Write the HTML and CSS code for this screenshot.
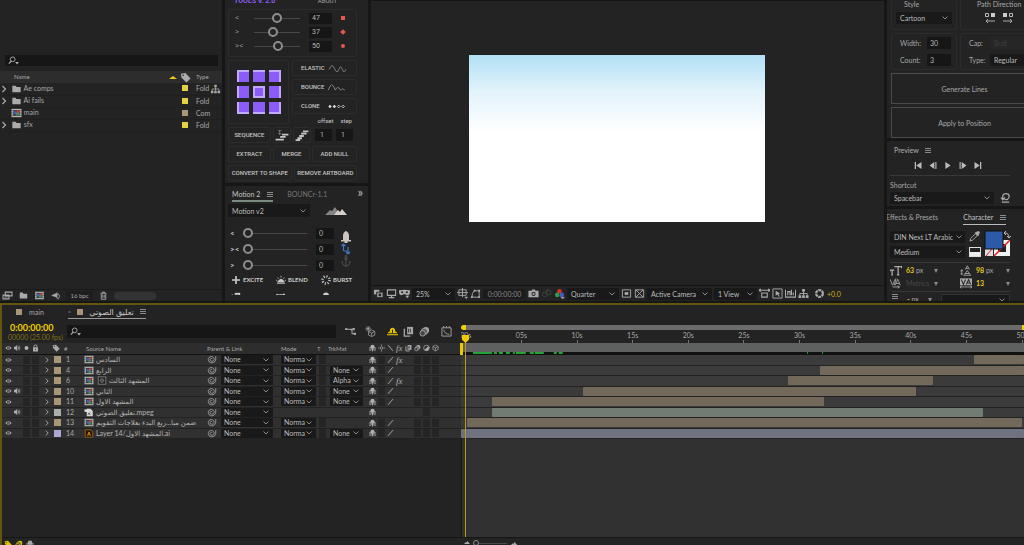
FILE: index.html
```
<!DOCTYPE html>
<html lang="en">
<head>
<meta charset="UTF-8">
<title>Motion Editor</title>
<link rel="stylesheet" href="styles.css">
</head>
<body>
<svg class="sprite" aria-hidden="true">
    <symbol id="search" viewBox="0 0 14 12"><circle cx="6" cy="4.5" r="3" fill="none" stroke="currentColor" stroke-width="1.2"/><path d="M4 7L1 10" stroke="currentColor" stroke-width="1.5"/><path d="M9 8h5l-2.500 3z" fill="currentColor"/></symbol>
    <symbol id="folder" viewBox="0 0 12 12"><path d="M1 2h4l1 1.500h5V10H1z" fill="currentColor"/></symbol>
    <symbol id="comp" viewBox="0 0 12 12"><path d="M0 1h12v10H0z" fill="#b4b4b4"/><path d="M2 2.500h8v7H2z" fill="#3b3b3b"/><path d="M0 3h1.500M0 6h1.500M0 9h1.500M10.500 3H12M10.500 6H12M10.500 9H12" stroke="#444"/><path d="M6 3h3.500v3H6z" fill="#d23a30"/><path d="M5 5.500h4V9H5z" fill="#4c8a52"/><circle cx="4.500" cy="5.500" r="2" fill="#3d66b8"/></symbol>
    <symbol id="arrow" viewBox="0 0 6 10"><path d="M1.500 2l3 3-3 3" fill="none" stroke="currentColor" stroke-width="1.200"/></symbol>
    <symbol id="tag" viewBox="0 0 12 12"><path d="M1 2l5-1 5.500 6L7 11.500 1.500 6z" fill="currentColor"/><circle cx="3.500" cy="3.500" r=".9" fill="#2d2d2d"/></symbol>
    <symbol id="tree" viewBox="0 0 12 12"><path d="M4.500 1h3v3h-3zM.5 8h3v3h-3zM8.500 8h3v3h-3zM4.500 8h3v3h-3z" fill="currentColor"/><path d="M6 4v4M2 8V6h8v2" fill="none" stroke="currentColor"/></symbol>
    <symbol id="footage" viewBox="0 0 14 12"><path d="M4 1.500h9v5H4zM1 5.500h8v5H1z" fill="#222" stroke="currentColor" stroke-width="1.400"/><path d="M3 8h4" stroke="currentColor"/></symbol>
    <symbol id="rocket" viewBox="0 0 12 12"><path d="M1 6l7-3v5zM8 2l1.500 1.500M8 9.500L10.500 11" fill="currentColor" stroke="currentColor"/><circle cx="9" cy="7" r="2.500" fill="none" stroke="currentColor"/></symbol>
    <symbol id="trash" viewBox="0 0 12 12"><path d="M2 3h8M4.500 3V1.500h3V3M3 4v7h6V4M5 5v4M7 5v4" fill="none" stroke="currentColor" stroke-width="1.200"/></symbol>
    <symbol id="eye" viewBox="0 0 12 10"><path d="M.5 5Q6-1 11.500 5 6 11 .5 5z" fill="currentColor"/><circle cx="6" cy="5" r="2.300" fill="#2b2b2b"/><circle cx="6" cy="5" r="1" fill="currentColor"/></symbol>
    <symbol id="sound" viewBox="0 0 12 10"><path d="M0 3h2l3.500-3v10L2 7H0z" fill="currentColor"/><path d="M7 2.500q2 2.500 0 5M8.500 1q3.500 4 0 8" fill="none" stroke="currentColor" stroke-width="1.200"/></symbol>
    <symbol id="dot" viewBox="0 0 10 10"><circle cx="5" cy="5" r="2.800" fill="currentColor"/></symbol>
    <symbol id="lock" viewBox="0 0 10 10"><path d="M1.500 4h7v6h-7z" fill="currentColor"/><path d="M3 4V2.500a2 2 0 0 1 4 0V4" fill="none" stroke="currentColor" stroke-width="1.300"/><path d="M5 6v2" stroke="#2d2d2d"/></symbol>
    <symbol id="whip" viewBox="0 0 12 10"><path d="M10.500 1v3.500c0 3-2.500 4.500-5 4.500s-4-2-4-4 1.500-3.500 3.700-3.500S8.500 3 8.500 5 7 7 5.500 7 3.500 6 3.700 5 5 3.300 6.200 4" fill="none" stroke="currentColor"/></symbol>
    <symbol id="shy" viewBox="0 0 10 10"><path d="M2 5V3.500a3 3 0 0 1 6 0V5z" fill="currentColor"/><path d="M0 5h10M0 8h3.500M6.500 8H10M5 4v6M2.500 6.500h5" stroke="currentColor" stroke-width="1.300"/></symbol>
    <symbol id="arch" viewBox="0 0 12 10"><path d="M1 7q0-2 2-2 0-4 3-4t3 4q2 0 2 2z" fill="currentColor"/><path d="M0 8.500h12" stroke="currentColor" stroke-width="1.200"/><path d="M6 3v4" stroke="#232323"/></symbol>
    <symbol id="sun" viewBox="0 0 10 10"><circle cx="5" cy="5" r="1.800" fill="none" stroke="currentColor"/><path d="M5 0v2M5 8v2M0 5h2M8 5h2" stroke="currentColor"/></symbol>
    <symbol id="slash" viewBox="0 0 10 10"><path d="M1.500 9L8.500 1" stroke="currentColor" stroke-width="1.300"/></symbol>
    <symbol id="backslash" viewBox="0 0 10 10"><path d="M1.500 1l7 8" stroke="currentColor" stroke-width="1.300"/></symbol>
    <symbol id="blend" viewBox="0 0 12 12"><path d="M4.500 1H11v8H4.500z" fill="currentColor"/><path d="M1.500 3v8H8" fill="none" stroke="currentColor" stroke-width="1.500"/><path d="M6 3v4M8 3v4" stroke="#333"/></symbol>
    <symbol id="blur" viewBox="0 0 12 12"><circle cx="7.500" cy="4.500" r="3.500" fill="currentColor"/><circle cx="5.700" cy="6.200" r="3.500" fill="#555" stroke="currentColor"/><circle cx="4" cy="8" r="3" fill="#444" stroke="currentColor"/></symbol>
    <symbol id="adjust" viewBox="0 0 10 10"><circle cx="5" cy="5" r="4" fill="none" stroke="currentColor"/><path d="M7.800 2.200a4 4 0 0 1-5.600 5.600z" fill="currentColor"/></symbol>
    <symbol id="cube" viewBox="0 0 12 12"><path d="M6 1l4.500 2.500v5L6 11 1.500 8.500v-5zM1.500 3.500L6 6l4.500-2.500M6 6v5" fill="none" stroke="currentColor" stroke-width="1.100"/></symbol>
    <symbol id="flow" viewBox="0 0 14 12"><path d="M1 3h5q3 0 3 3v3h3M6 3h5" fill="none" stroke="currentColor" stroke-width="1.300"/><path d="M9.500 1.500h3V4.500h-3zM11 7.500h3v3h-3zM0 2h3v2H0z" fill="currentColor"/></symbol>
    <symbol id="draft" viewBox="0 0 14 14"><path d="M4 0v7M.5 3.500h7M1.500 1l5 5M6.500 1l-5 5" stroke="currentColor"/><path d="M8.500 5l4 2v4.500l-4 2-4-2V7zM4.500 7l4 2 4-2M8.500 9v4" fill="none" stroke="currentColor"/></symbol>
    <symbol id="graph" viewBox="0 0 12 12"><path d="M1 2h10v9H1zM3 0v2M6 0v2M9 0v2" fill="none" stroke="currentColor"/><path d="M3 4q1 5 6 5" fill="none" stroke="currentColor"/></symbol>
    <symbol id="peaks" viewBox="0 0 22 8"><path d="M0 8l5-5 2 1 3-4 5 8z" fill="#858585"/><path d="M9 8l4-5 2 2 2-3 5 6z" fill="#d4cfca"/></symbol>
    <symbol id="stairs" viewBox="0 0 14 12"><path d="M8 1.500h6M6 4h6M4 6.500h5M2 9h5M0 11h5" stroke="currentColor" stroke-width="2"/></symbol>
    <symbol id="stairs-down" viewBox="0 0 14 12"><path d="M7 5h7M5 7.500h6M0 10.500h9" stroke="currentColor" stroke-width="2"/><path d="M2 0h5M4.500 0v5M3 3.500L4.500 5 6 3.500" fill="none" stroke="#888"/></symbol>
    <symbol id="stack" viewBox="0 0 12 12"><path d="M1 2h6v5H1z" fill="currentColor"/><path d="M4 4.500h7v6H4z" fill="#999" stroke="#252525"/><circle cx="7.500" cy="7.500" r="1.500" fill="#252525"/></symbol>
    <symbol id="monitor" viewBox="0 0 12 12"><path d="M1.500 2h9v6h-9zM6 8v2M3 10.500h6" fill="none" stroke="currentColor" stroke-width="1.200"/></symbol>
    <symbol id="mask" viewBox="0 0 14 12"><path d="M0 2q7-1.500 14 0v3q-1 4-4 3L7 6.500 4 8Q1 9 0 5z" fill="currentColor"/><circle cx="4" cy="4.500" r="1.300" fill="#252525"/><circle cx="10" cy="4.500" r="1.300" fill="#252525"/><path d="M8 9h5l-2.500 3z" fill="currentColor"/></symbol>
    <symbol id="safe" viewBox="0 0 12 12"><path d="M2 2h8v6H2zM6 0v10M0 5h12" fill="none" stroke="currentColor"/><path d="M8 9.500h4L10 12z" fill="currentColor"/></symbol>
    <symbol id="path" viewBox="0 0 12 12"><path d="M2 10q0-5 3-7h5v7z" fill="none" stroke="currentColor"/><path d="M1 9h2v2H1zM4 2h2v2H4zM9 2h2v2H9zM9 9h2v2H9z" fill="currentColor"/></symbol>
    <symbol id="camera" viewBox="0 0 12 12"><path d="M.5 3H4l.5-1.500h3L8 3h3.500v7H.5z" fill="currentColor"/><circle cx="6" cy="6.500" r="2.300" fill="#252525"/><circle cx="6" cy="6.500" r="1.200" fill="currentColor"/></symbol>
    <symbol id="chain" viewBox="0 0 12 12"><circle cx="4" cy="7" r="2.500" fill="none" stroke="currentColor"/><circle cx="8.500" cy="5" r="2.500" fill="none" stroke="currentColor"/><path d="M5 3l3-2" stroke="currentColor"/></symbol>
    <symbol id="rgb" viewBox="0 0 12 12"><circle cx="6" cy="3.500" r="2.500" fill="#d93025"/><circle cx="3.500" cy="7.500" r="2.500" fill="#2e9b45"/><circle cx="8.500" cy="7.500" r="2.500" fill="#4b56c9"/><path d="M7 10h5l-2.500 2z" fill="#bbb"/></symbol>
    <symbol id="roi" viewBox="0 0 12 12"><path d="M1.500 2h9v8h-9z" fill="none" stroke="currentColor"/><path d="M4 4.500h4v3H4z" fill="currentColor"/></symbol>
    <symbol id="alpha" viewBox="0 0 12 12"><path d="M1.500 2h9v8h-9zM2 2l8 8M10 2l-8 8" fill="none" stroke="currentColor"/></symbol>
    <symbol id="aspect" viewBox="0 0 12 12"><path d="M0 2.500h12M2 1L0 2.500 2 4M10 1l2 1.500L10 4M3 5.500h6V10H3z" fill="none" stroke="currentColor" stroke-width="1.200"/></symbol>
    <symbol id="fast" viewBox="0 0 12 12"><path d="M1 1h10v10H1z" fill="none" stroke="currentColor"/><path d="M4 3l5 3-2 .5 1.500 2.500-1 .5L6 7 4 8.500z" fill="currentColor"/></symbol>
    <symbol id="chart" viewBox="0 0 12 12"><path d="M.5 2v8h11V2M3 8V4h2.500v4M7 8V2M9 8V5" fill="none" stroke="currentColor" stroke-width="1.200"/></symbol>
    <symbol id="aperture" viewBox="0 0 12 12"><circle cx="6" cy="6" r="3.700" fill="none" stroke="currentColor" stroke-width="2.400" stroke-dasharray="3.200 .7"/></symbol>
    <symbol id="reset" viewBox="0 0 12 12"><path d="M3 8V4.500C3 1 10 1 10 4.500S7 9 5 8M1 6l2 2.500L5.500 6M2 11h8" fill="none" stroke="currentColor" stroke-width="1.300"/></symbol>
    <symbol id="dropper" viewBox="0 0 12 12"><path d="M1 11l1-3 5-5 2 2-5 5z" fill="none" stroke="currentColor"/><path d="M6 2l4 4 2-5-2-1z" fill="currentColor"/></symbol>
    <symbol id="bell" viewBox="0 0 10 12"><path d="M5 0q3 1 3 5v4H2V5q0-4 3-5zM0 9h10v1.500H0zM3.500 10h3v2h-3z" fill="#cbc4bf"/></symbol>
    <symbol id="updown" viewBox="0 0 10 12"><path d="M2.500 8V1M.5 3l2-2 2 2M3 8h3M7 4v7M5 9l2 2 2-2" fill="none" stroke="#3e78c8" stroke-width="1.200"/></symbol>
    <symbol id="anchor" viewBox="0 0 10 12"><path d="M5 2v9M1 6q0 5 4 5t4-5M3 4h4" fill="none" stroke="#555"/><circle cx="5" cy="1.500" r="1" fill="none" stroke="#555"/></symbol>
    <symbol id="plus" viewBox="0 0 10 10"><path d="M5 1v8M1 5h8" stroke="currentColor" stroke-width="1.600"/></symbol>
    <symbol id="crown" viewBox="0 0 12 10"><path d="M1 9h10M2 7.500q4-7 8 0zM6 0v2M2 2l1 1.500M10 2L9 3.500M0 5l1.500 1M12 5l-1.500 1" fill="currentColor" stroke="currentColor"/></symbol>
    <symbol id="burst" viewBox="0 0 12 12"><circle cx="6" cy="6" r="4.200" fill="none" stroke="currentColor" stroke-width="3" stroke-dasharray="1.300 2"/></symbol>
    <symbol id="wave" viewBox="0 0 20 8"><path d="M0 5Q3-3 6 4t5 1 4 0 4 0" fill="none" stroke="currentColor"/></symbol>
    <symbol id="hops" viewBox="0 0 20 8"><path d="M0 7q4-12 8 0 3-6 6 0 2-3 5 0" fill="none" stroke="currentColor"/></symbol>
    <symbol id="clones" viewBox="0 0 20 8"><path d="M2 2l2 2-2 2-2-2zM7 2l2 2-2 2-2-2z" fill="currentColor"/><path d="M12 2.500L13.500 4 12 5.500 10.500 4zM17 2.500L18.500 4 17 5.500 15.500 4z" fill="none" stroke="currentColor"/></symbol>
    <symbol id="hills" viewBox="0 0 12 6"><path d="M0 6l4-4 1 1 2-3 5 6z" fill="currentColor"/></symbol>
    <symbol id="ai" viewBox="0 0 12 12"><path d="M1 1h7l3 3v7H1z" fill="#2b1704" stroke="#a86a1a"/><path d="M4 9l2-5 2 5M5 7.500h2" fill="none" stroke="#f0a030"/></symbol>
    <symbol id="mpeg" viewBox="0 0 12 12"><path d="M3 1h5l3 3v7H3z" fill="#d8d8d8"/><path d="M0 2h4v3H0z" fill="#eee"/><path d="M4.500 9l3-3M5 7l3 2" stroke="#333"/></symbol>
    <symbol id="matte" viewBox="0 0 12 12"><path d="M1 1h10v10H1z" fill="#222" stroke="#8a8a8a"/><circle cx="6" cy="6" r="3" fill="#777"/><path d="M3 3l6 6M9 3L3 9" stroke="#222"/></symbol>
    <symbol id="size" viewBox="0 0 14 12"><path d="M0 5.500h5M2.500 5.500V11M5 1.500h9M9.500 1.500V11M1.500 11h2M8 11h3M.5 5v2M13.500 1v2.500" stroke="currentColor" stroke-width="1.500"/></symbol>
    <symbol id="leading" viewBox="0 0 14 12"><path d="M2 5v6M.5 7L2 5l1.500 2M.5 9.500L2 11l1.500-1.500M6 5l2.500-4.500L11 5M7 3.500h3M5 11l3.500-5 3.500 5M6 9.500h5M4 11.500h9" fill="none" stroke="currentColor"/></symbol>
    <symbol id="kern" viewBox="0 0 14 12"><path d="M0 1l3 7 3-7M6 8l3-7 3 7M7 6h4M3 10h8M9 8.500l2 1.500-2 1.500M7 0L5 8" fill="none" stroke="currentColor"/></symbol>
    <symbol id="tracking" viewBox="0 0 14 12"><path d="M0 0h14v8H0z" fill="currentColor"/><path d="M1.500 1.500L4 7l2.500-5.500M7.500 7L10 1.500 12.500 7M8.500 5.500h3" fill="none" stroke="#222" stroke-width="1.200"/><path d="M0 10h14M2 8.500L0 10l2 1.500M12 8.500l2 1.500-2 1.500" fill="none" stroke="currentColor"/></symbol>
</svg>

<div class="workspace">
    <section class="panel project">
        <label class="search"><svg class="icon"><use href="#search"/></svg><input type="text" aria-label="Search project"></label>
        <table class="files">
            <thead><tr><th class="c-arrow"></th><th>Name</th><th class="c-sort"><span class="sort"></span></th><th class="c-tag"><svg class="icon"><use href="#tag"/></svg></th><th class="c-type">Type</th><th class="c-flow"></th></tr></thead>
            <tbody>
                <tr><td><svg class="icon tiny"><use href="#arrow"/></svg></td><td colspan="2"><svg class="icon"><use href="#folder"/></svg> Ae comps</td><td><i class="swatch yellow"></i></td><td>Fold</td><td><svg class="icon"><use href="#tree"/></svg></td></tr>
                <tr><td><svg class="icon tiny"><use href="#arrow"/></svg></td><td colspan="2"><svg class="icon"><use href="#folder"/></svg> Ai fails</td><td><i class="swatch yellow"></i></td><td>Fold</td><td></td></tr>
                <tr><td></td><td colspan="2"><svg class="icon"><use href="#comp"/></svg> main</td><td><i class="swatch sand"></i></td><td>Com</td><td></td></tr>
                <tr><td><svg class="icon tiny"><use href="#arrow"/></svg></td><td colspan="2"><svg class="icon"><use href="#folder"/></svg> sfx</td><td><i class="swatch yellow"></i></td><td>Fold</td><td></td></tr>
            </tbody>
        </table>
        <div class="project-bar">
            <svg class="icon"><use href="#footage"/></svg>
            <svg class="icon"><use href="#folder"/></svg>
            <svg class="icon"><use href="#comp"/></svg>
            <svg class="icon"><use href="#rocket"/></svg>
            <button class="bpc">16 bpc</button>
            <svg class="icon"><use href="#trash"/></svg>
            <span class="scrollbar"></span>
        </div>
    </section>

    <div class="column motion">
        <section class="panel tools">
            <div class="tools-head"><b>TOOLS V. 2.0</b><span>ABOUT</span></div>
            <div class="box sliders">
                <div class="slider-row"><span>&lt;</span><input type="range" value="50" aria-label="Ease in"><input type="text" value="47" aria-label="Ease in value"><i class="key square"></i></div>
                <div class="slider-row"><span>&gt;</span><input type="range" value="38" aria-label="Ease out"><input type="text" value="37" aria-label="Ease out value"><i class="key diamond"></i></div>
                <div class="slider-row"><span>&gt;&lt;</span><input type="range" value="54" aria-label="Ease both"><input type="text" value="50" aria-label="Ease both value"><i class="key round"></i></div>
            </div>
            <div class="tools-mid">
                <div class="box anchors">
                    <button class="t l" aria-label="Top left"></button><button class="t" aria-label="Top"></button><button class="t r" aria-label="Top right"></button>
                    <button class="l" aria-label="Left"></button><button class="mid" aria-label="Center"></button><button class="r" aria-label="Right"></button>
                    <button class="b l" aria-label="Bottom left"></button><button class="b" aria-label="Bottom"></button><button class="b r" aria-label="Bottom right"></button>
                </div>
                <div class="effects">
                    <button>ELASTIC <svg><use href="#wave"/></svg></button>
                    <button>BOUNCE <svg><use href="#hops"/></svg></button>
                    <button>CLONE <svg class="bright"><use href="#clones"/></svg></button>
                    <div class="captions"><label for="offset">offset</label><label for="step">step</label></div>
                </div>
            </div>
            <div class="tool-row"><button class="seq">SEQUENCE</button><button class="sq" aria-label="Steps down"><svg><use href="#stairs-down"/></svg></button><button class="sq" aria-label="Steps up"><svg><use href="#stairs"/></svg></button><input type="text" id="offset" value="1"><input type="text" id="step" value="1"></div>
            <div class="tool-row"><button class="seq">EXTRACT</button><button>MERGE</button><button>ADD NULL</button></div>
            <div class="tool-row"><button>CONVERT TO SHAPE</button><button>REMOVE ARTBOARD</button></div>
        </section>
        <section class="panel motion2">
            <div class="tabs"><a href="#" class="active">Motion 2 <span class="menu"></span></a><a href="#">BOUNCr-1.1</a><span class="more">»</span></div>
            <div class="preset"><select aria-label="Preset"><option>Motion v2</option></select><svg><use href="#peaks"/></svg></div>
            <div class="motion-body">
                <div class="motion-sliders">
                    <div class="slider-row"><b>&lt;</b><input type="range" value="0" aria-label="In"><input type="text" value="0" aria-label="In value"></div>
                    <div class="slider-row"><b>&gt;&lt;</b><input type="range" value="0" aria-label="Both"><input type="text" value="0" aria-label="Both value"></div>
                    <div class="slider-row"><b>&gt;</b><input type="range" value="0" aria-label="Out"><input type="text" value="0" aria-label="Out value"></div>
                </div>
                <div class="side-icons"><svg><use href="#bell"/></svg><svg><use href="#updown"/></svg><svg><use href="#anchor"/></svg></div>
            </div>
            <div class="actions">
                <button><svg><use href="#plus"/></svg>EXCITE</button><button><svg><use href="#crown"/></svg>BLEND</button><button><svg><use href="#burst"/></svg>BURST</button>
                <button aria-label="Clone"><svg><use href="#blend"/></svg></button><button aria-label="Jump"><svg><use href="#flow"/></svg></button><button aria-label="Name"><svg><use href="#shy"/></svg></button>
            </div>
        </section>
    </div>

    <section class="panel viewer">
        <div class="stage"><div class="canvas"></div></div>
        <div class="viewer-bar">
            <svg class="icon"><use href="#stack"/></svg>
            <svg class="icon"><use href="#monitor"/></svg>
            <svg class="icon"><use href="#mask"/></svg>
            <select class="zoom" aria-label="Zoom"><option>25%</option></select>
            <svg class="icon"><use href="#safe"/></svg>
            <svg class="icon"><use href="#path"/></svg>
            <button class="clock">0:00:00:00</button>
            <svg class="icon"><use href="#camera"/></svg>
            <svg class="icon off"><use href="#chain"/></svg>
            <svg class="icon"><use href="#rgb"/></svg>
            <select class="quality" aria-label="Resolution"><option>Quarter</option></select>
            <svg class="icon"><use href="#roi"/></svg>
            <svg class="icon"><use href="#alpha"/></svg>
            <select class="cam" aria-label="Camera"><option>Active Camera</option></select>
            <select class="views" aria-label="Views"><option>1 View</option></select>
            <svg class="icon"><use href="#aspect"/></svg>
            <svg class="icon"><use href="#fast"/></svg>
            <svg class="icon"><use href="#chart"/></svg>
            <svg class="icon"><use href="#tree"/></svg>
            <svg class="icon gap"><use href="#aperture"/></svg>
            <span class="exposure">+0.0</span>
        </div>
    </section>

    <div class="column side">
        <section class="panel lines">
            <div class="lines-inner">
                <div class="box style"><label for="style">Style</label><select id="style"><option>Cartoon</option></select></div>
                <div class="box direction"><span>Path Direction</span>
                    <svg viewBox="0 0 28 11"><path d="M.5 1.500h3v3h-3zM24.500 1.500h3v3h-3z" fill="none" stroke="#bbb"/><path d="M6 1h4v4H6zM18 1h4v4h-4z" fill="#ccc"/><path d="M10 9H1M3 7L1 9l2 2M18 9h9M25 7l2 2-2 2" fill="none" stroke="#aaa"/></svg>
                </div>
                <div class="box pair"><label for="lw">Width:</label><input type="text" id="lw" value="30"><label for="count">Count:</label><input type="text" id="count" value="3"></div>
                <div class="box pair caps"><label for="cap">Cap:</label><select id="cap" class="plain" disabled><option>Butt</option></select><label for="type">Type:</label><select id="type" class="plain"><option>Regular</option></select></div>
                <button class="big">Generate Lines</button>
                <button class="big">Apply to Position</button>
            </div>
        </section>
        <section class="panel preview">
            <h2>Preview <span class="menu"></span></h2>
            <div class="transport">
                <button aria-label="First frame"><svg viewBox="0 0 8 8"><path d="M1 0v8" stroke="#bbb" stroke-width="1.500"/><path d="M8 0v8L2 4z" fill="#bbb"/></svg></button>
                <button aria-label="Previous frame"><svg viewBox="0 0 8 8"><path d="M7.300 0v8" stroke="#bbb" stroke-width="1.300"/><path d="M5.500 0v8L0 4z" fill="#bbb"/></svg></button>
                <button aria-label="Play"><svg viewBox="0 0 8 8"><path d="M1 0v8l6-4z" fill="#bbb"/></svg></button>
                <button aria-label="Next frame"><svg viewBox="0 0 8 8"><path d="M.7 0v8" stroke="#bbb" stroke-width="1.300"/><path d="M2.500 0v8L8 4z" fill="#bbb"/></svg></button>
                <button aria-label="Last frame"><svg viewBox="0 0 8 8"><path d="M7 0v8" stroke="#bbb" stroke-width="1.500"/><path d="M0 0v8l6-4z" fill="#bbb"/></svg></button>
            </div>
            <label class="shortcut-label" for="shortcut">Shortcut</label>
            <div class="shortcut"><select id="shortcut"><option>Spacebar</option></select><svg class="icon"><use href="#reset"/></svg></div>
        </section>
        <section class="panel character">
            <div class="char-tabs"><a href="#">Effects &amp; Presets</a><a href="#" class="active">Character <span class="menu"></span></a></div>
            <div class="font-row">
                <div class="font-selects"><select aria-label="Font family"><option>DIN Next LT Arabic</option></select><select aria-label="Font style"><option>Medium</option></select></div>
                <div class="picker"><svg class="icon"><use href="#dropper"/></svg><i class="halves"></i></div>
                <svg class="colors" viewBox="0 0 26 26"><path d="M9 9h16v16H9z" fill="#f2f2f2"/><path d="M13 13h8v8h-8z" fill="#222"/><path d="M9 25L25 9" stroke="#d22" stroke-width="1.500"/><path d="M0 18h8v7H0z" fill="#ddd"/><path d="M1 25l6-7" stroke="#d22"/><path d="M0 0h18v18H0z" fill="#2a5aa8" stroke="#111"/><path d="M20 2q4 0 4 5M22 5l2 2 2-2M21 0l-2 2 2 2" fill="none" stroke="#bbb"/></svg>
            </div>
            <div class="metrics">
                <svg class="icon"><use href="#size"/></svg><span><b>63</b> px</span><i class="drop"></i>
                <svg class="icon"><use href="#leading"/></svg><span><b>98</b> px</span><i class="drop"></i>
                <svg class="icon"><use href="#kern"/></svg><span class="dim">Metrics</span><i class="drop"></i>
                <svg class="icon"><use href="#tracking"/></svg><span><b>13</b></span><i class="drop"></i>
            </div>
            <div class="stroke"><span class="menu"></span><span><b>-</b> px</span><i class="drop"></i><select aria-label="Stroke order"><option></option></select></div>
        </section>
    </div>
</div>

<section class="timeline">
    <div class="timeline-head">
        <div class="head-left">
            <div class="comp-tabs"><a href="#"><i class="swatch sand"></i>main</a><a href="#" class="active"><small>×</small><i class="swatch sand"></i><bdi>تعليق الصوتي</bdi><span class="menu"></span></a></div>
            <div class="controls">
                <div class="time"><b>0:00:00:00</b><small>00000 (25.00 fps)</small></div>
                <label class="search"><svg class="icon"><use href="#search"/></svg><input type="text" aria-label="Search layers"></label>
                <div class="comp-buttons"><svg><use href="#flow"/></svg><svg><use href="#draft"/></svg><svg class="on"><use href="#arch"/></svg><svg><use href="#blend"/></svg><svg><use href="#blur"/></svg><svg><use href="#graph"/></svg></div>
            </div>
        </div>
        <div class="head-right">
            <div class="navigator"></div>
            <div class="ruler" id="ruler"></div>
        </div>
    </div>
    <div class="timeline-body">
        <table class="layers">
            <colgroup><col class="w-av"><col class="w-arrow"><col class="w-color"><col class="w-num"><col class="w-name"><col class="w-parent"><col class="w-mode"><col class="w-t"><col class="w-trk"><col class="w-sw"><col class="w-end"><col></colgroup>
            <thead><tr>
                <th><span class="slots"><svg><use href="#eye"/></svg><svg><use href="#sound"/></svg><svg><use href="#dot"/></svg><svg><use href="#lock"/></svg></span></th>
                <th></th><th><svg class="head-tag"><use href="#tag"/></svg></th><th>#</th><th class="source">Source Name</th><th>Parent &amp; Link</th><th class="mode-head">Mode</th><th>T</th><th>TrkMat</th>
                <th><span class="slots"><svg><use href="#shy"/></svg><svg><use href="#sun"/></svg><svg><use href="#backslash"/></svg><em>fx</em><svg><use href="#blend"/></svg><svg><use href="#blur"/></svg><svg><use href="#adjust"/></svg><svg><use href="#cube"/></svg></span></th>
                <th></th>
                <th class="work"><svg class="cache" viewBox="0 0 563 2" preserveAspectRatio="none"><path d="M10 1h19M31 1h3M36 1h4M43 1h4M50 1h2M53 1h10M67 1h4M72 1h9M91 1h3M96 1h4M345 1h1M360 1h1" stroke="#24a336" stroke-width="2"/></svg></th>
            </tr></thead>
            <tbody id="layer-rows"></tbody>
        </table>
        <div class="empty"><div></div><div></div></div>
    </div>
    <div class="timeline-foot">
        <svg class="on"><use href="#tag"/></svg><svg class="on"><use href="#blur"/></svg><svg><use href="#shy"/></svg>
        <svg class="zoom-out"><use href="#hills"/></svg><input type="range" value="0" aria-label="Timeline zoom"><svg><use href="#hills"/></svg>
    </div>
    <div class="playhead"></div>
</section>
<script src="script.js"></script>
</body>
</html>
```
FILE: styles.css
```
* {
    box-sizing: border-box;
}
body {
    margin: 0;
    height: 100vh;
    display: flex;
    flex-direction: column;
    overflow: hidden;
    background: #161616;
    color: #a8a8a8;
    font-family: Lato, "Noto Sans", "DejaVu Sans", sans-serif;
    font-size: 7px;
    line-height: 10px;
}
.sprite {
    display: none;
}
svg {
    display: block;
    flex: none;
}
a {
    color: inherit;
    text-decoration: none;
}
button, input, select {
    margin: 0;
    padding: 0;
    border: 0;
    border-radius: 0;
    background: none;
    color: inherit;
    font: inherit;
    min-width: 0;
}
input[type="text"] {
    background: #161616;
    color: #b5b5b5;
}
select {
    appearance: none;
    height: 12px;
    padding: 0 12px 0 4px;
    border-radius: 1px;
    color: #bcbcbc;
    background: #191919 url("data:image/svg+xml,%3Csvg xmlns='http://www.w3.org/2000/svg' width='6' height='4'%3E%3Cpath d='M.5.500L3 3 5.500.5' fill='none' stroke='%23888'/%3E%3C/svg%3E") no-repeat right 4px center;
}
select.plain {
    background-image: none;
}
input[type="range"] {
    appearance: none;
    height: 10px;
    background: linear-gradient(#484848, #484848) center / 100% 1px no-repeat;
}
input[type="range"]::-webkit-slider-thumb {
    appearance: none;
    width: 10px;
    height: 10px;
    border: 2px solid #8e8e8e;
    border-radius: 50%;
    background: #232323;
}
.icon {
    width: 11px;
    height: 11px;
    color: #aaa;
}
.swatch {
    display: inline-block;
    width: 6px;
    height: 6px;
    flex: none;
}
.yellow {
    background: #e2d242;
}
.sand {
    background: #a89676;
}
.menu {
    display: inline-block;
    width: 6px;
    height: 5px;
    border: solid #8a8a8a;
    border-width: 1px 0;
    background: linear-gradient(#8a8a8a, #8a8a8a) center / 100% 1px no-repeat;
}
.workspace {
    display: grid;
    grid-template-columns: 222px 143px 1fr 137px;
    column-gap: 3px;
    padding-bottom: 2px;
}
.panel {
    background: #232323;
    overflow: hidden;
    min-width: 0;
}
.column {
    display: flex;
    flex-direction: column;
    gap: 3px;
    min-width: 0;
}
.box {
    border: 1px solid #2c2c2c;
    border-radius: 2px;
}

/* project */
.project {
    display: flex;
    flex-direction: column;
    padding-top: 55px;
}
.search {
    display: flex;
    align-items: center;
    background: #161616;
}
.search input {
    flex: 1;
    background: none;
    height: 11px;
}
.project .search {
    margin: 0 4px 5px 5px;
    padding-left: 3px;
}
.files {
    width: 100%;
    table-layout: fixed;
    border-collapse: collapse;
}
.files th {
    height: 12px;
    padding: 0 0 0 3px;
    background: #2d2d2d;
    font-weight: normal;
    text-align: left;
    font-size: 6px;
}
.files td {
    height: 12px;
    padding: 0;
    border-bottom: 1px solid #1f1f1f;
    line-height: 9px;
    white-space: nowrap;
}
.files td:nth-child(3) {
    padding-left: 2px;
}
.files td:nth-child(4) {
    padding-left: 3px;
}
.files .icon {
    display: inline-block;
    vertical-align: middle;
}
.files td .icon {
    height: 10px;
}
.files .tiny {
    width: 8px;
}
.files .c-arrow { width: 11px; }
.files .c-sort { width: 14px; }
.files .c-tag { width: 13px; padding: 0; }
.files .c-type { width: 17px; }
.files .c-flow { width: 12px; }
.sort {
    display: block;
    width: 8px;
    border: solid transparent;
    border-width: 0 4px 3px;
    border-bottom-color: #f0c808;
}
.project-bar {
    display: flex;
    align-items: center;
    gap: 5px;
    margin-top: auto;
    padding: 0 2px;
    height: 12px;
    border-top: 1px solid #1b1b1b;
}
.project-bar .icon {
    height: 9px;
}
.bpc {
    width: 27px;
    background: #1e1e1e;
    font-size: 6px;
    line-height: 9px;
}
.scrollbar {
    width: 42px;
    height: 8px;
    border-radius: 4px;
    background: #333;
}

/* tools */
.tools {
    display: flex;
    flex-direction: column;
    gap: 3px;
    height: 183px;
    padding: 0 11px 3px 3px;
    font-family: Roboto, sans-serif;
    font-size: 6px;
}
.tools-head {
    display: flex;
    align-items: flex-end;
    justify-content: space-between;
    flex: none;
    height: 15px;
    margin: -9px 20px 0 6px;
}
.tools-head b {
    color: #8a5cf0;
    font-size: 7px;
    line-height: 10px;
}
.sliders {
    padding: 1px 0 3px;
}
.slider-row {
    display: flex;
    align-items: center;
    height: 14px;
}
.sliders .slider-row span {
    width: 25px;
    padding-left: 6px;
    color: #888;
    font-size: 8px;
}
.sliders input[type="range"] {
    width: 46px;
    margin-right: 9px;
}
.sliders input[type="text"] {
    width: 23px;
    height: 11px;
    padding-left: 3px;
    font-size: 7px;
}
.key {
    width: 4px;
    height: 4px;
    margin-left: 9px;
    background: #e4594f;
}
.diamond {
    transform: rotate(45deg);
}
.round {
    border-radius: 50%;
}
.tools-mid {
    display: flex;
    gap: 3px;
}
.anchors {
    display: grid;
    grid-template-columns: repeat(3, 12px);
    grid-auto-rows: 12px;
    gap: 4px;
    place-content: center;
    width: 61px;
}
.anchors button {
    border: 0 solid #c3a8fb;
    background: #8b5cf6;
}
.anchors .t { border-top-width: 2px; }
.anchors .b { border-bottom-width: 2px; }
.anchors .l { border-left-width: 2px; }
.anchors .r { border-right-width: 2px; }
.anchors .mid { border-width: 2px; }
.effects {
    flex: 1;
    display: flex;
    flex-direction: column;
    gap: 3px;
}
.effects button, .tool-row button {
    border: 1px solid #2c2c2c;
    border-radius: 2px;
    color: #c4c4c4;
    font-weight: 500;
}
.effects button {
    display: flex;
    align-items: center;
    gap: 3px;
    height: 16px;
    padding-left: 8px;
}
.effects svg {
    width: 20px;
    height: 7px;
    color: #8a8a8a;
}
.effects .bright {
    margin-left: 4px;
    color: #ddd;
}
.captions {
    display: flex;
    justify-content: flex-end;
    gap: 7px;
    padding-right: 5px;
    color: #ccc;
    line-height: 7px;
}
.tool-row {
    display: flex;
    gap: 2px;
}
.tool-row button {
    flex: 1 1 auto;
    height: 16px;
    white-space: nowrap;
}
.tool-row .seq {
    flex: 0 0 43px;
}
.tool-row .sq {
    flex: 0 0 18px;
    padding: 0 1px;
}
.tool-row .sq svg {
    width: 14px;
    height: 11px;
}
.tool-row input {
    width: 17px;
    height: 12px;
    margin: 2px 0 0 2px;
    padding-left: 5px;
    font-size: 7px;
}

/* motion 2 */
.motion2 {
    flex: 1;
    padding: 0 3px;
}
.tabs {
    display: flex;
    align-items: flex-start;
    height: 18px;
}
.tabs a {
    margin-left: 4px;
    padding: 3px 0 1px;
    color: #777;
    white-space: nowrap;
}
.tabs .active {
    margin-right: 10px;
    border-bottom: 2px solid #7c8b80;
    color: #c4c4c4;
}
.tabs .menu {
    margin-left: 5px;
}
.more {
    margin-left: auto;
    padding-right: 2px;
    color: #bbb;
    font-size: 13px;
    line-height: 12px;
}
.preset {
    display: flex;
    align-items: center;
    gap: 15px;
}
.preset select {
    width: 82px;
    height: 13px;
}
.preset svg {
    width: 22px;
    height: 8px;
}
.motion-body {
    display: flex;
    gap: 6px;
    padding-top: 8px;
}
.motion-sliders {
    width: 106px;
}
.motion-sliders .slider-row {
    height: 16px;
}
.motion-sliders b {
    width: 15px;
    padding-left: 2px;
    color: #ccc;
    font-size: 8px;
}
.motion-sliders input[type="range"] {
    width: 64px;
    margin-right: 9px;
}
.motion-sliders input[type="text"] {
    width: 18px;
    height: 11px;
    padding-left: 3px;
}
.side-icons {
    padding: 6px 0 0 1px;
}
.side-icons svg {
    width: 10px;
    height: 12px;
}
.actions {
    display: grid;
    grid-template-columns: 44px 44px 43px;
    gap: 3px 1px;
    height: 22px;
    overflow: hidden;
    padding: 0 3px;
}
.actions button {
    display: flex;
    align-items: center;
    gap: 2px;
    height: 14px;
    color: #ccc;
    font-size: 6px;
    font-weight: bold;
}
.actions svg {
    width: 10px;
    height: 10px;
}

/* viewer */
.viewer {
    display: flex;
    flex-direction: column;
}
.stage {
    flex: 1;
    display: flex;
    justify-content: center;
    align-items: flex-start;
    padding: 54px 22px 0 0;
    border-top: 1px solid #151515;
    border-bottom: 1px solid #151515;
}
.canvas {
    width: 296px;
    aspect-ratio: 296 / 167;
    background: linear-gradient(#b2e0f5, #e2f3fb 22%, #fff 46%);
}
.viewer-bar {
    display: flex;
    align-items: center;
    gap: 2px;
    height: 15px;
    padding-left: 2px;
}
.viewer-bar .off {
    color: #444;
}
.viewer-bar .zoom { width: 43px; }
.viewer-bar .quality { width: 52px; }
.viewer-bar .cam { width: 65px; }
.viewer-bar .views { width: 43px; }
.clock {
    width: 43px;
    background: #1c1c1c;
    color: #8a8a8a;
}
.viewer-bar .gap {
    margin-left: 3px;
}
.exposure {
    color: #d0b010;
}

/* side */
.lines {
    height: 138px;
}
.lines-inner {
    display: grid;
    grid-template-columns: 66px 78px;
    gap: 3px;
    margin-right: -14px;
    padding-left: 4px;
}
.lines .style, .lines .direction {
    height: 30px;
    padding: 0 4px;
    border-top: 0;
    display: flex;
    flex-direction: column;
    gap: 4px;
    line-height: 8px;
}
.style label {
    padding-left: 8px;
}
.direction span {
    padding-left: 12px;
    white-space: nowrap;
}
.direction svg {
    width: 28px;
    height: 11px;
    margin-left: 20px;
}
.pair {
    display: grid;
    grid-template-columns: 27px 24px;
    gap: 3px 0;
    align-items: center;
    height: 37px;
    padding: 2px 4px 2px 8px;
}
.pair input {
    height: 12px;
    padding-left: 3px;
}
.caps {
    grid-template-columns: 21px 48px;
}
.caps select:disabled {
    background: #282828;
    color: #484848;
}
.big {
    grid-column: 1 / 3;
    height: 31px;
    border: 1px solid #4a4a4a;
}
.preview {
    height: 65px;
}
h2 {
    margin: 0;
    padding: 4px 0 0 7px;
    font-size: 7px;
    font-weight: 500;
}
.preview .menu, .char-tabs .menu {
    margin-left: 5px;
}
.transport {
    display: flex;
    gap: 7px;
    margin: 7px 14px 5px 3px;
    padding: 0 0 6px 24px;
    border-bottom: 1px solid #383838;
}
.transport svg {
    width: 8px;
    height: 7px;
}
.shortcut-label {
    display: block;
    padding-left: 3px;
    line-height: 9px;
}
.shortcut {
    display: flex;
    gap: 6px;
    padding: 2px 0 0 3px;
}
.shortcut select {
    width: 104px;
}
.character {
    flex: 1;
}
.char-tabs {
    display: flex;
    justify-content: space-between;
    height: 18px;
    margin: 0 18px 0 -1px;
    padding-top: 3px;
    white-space: nowrap;
}
.char-tabs .active {
    height: 13px;
    border-bottom: 1px solid #bbb;
    color: #c4c4c4;
}
.font-row {
    display: flex;
    gap: 4px;
    padding: 4px 0 4px 3px;
}
.font-selects {
    display: grid;
    gap: 3px;
    width: 75px;
}
.font-selects select {
    padding-right: 10px;
    background-position: right 3px center;
}
.picker {
    display: grid;
    gap: 4px;
}
.halves {
    width: 12px;
    height: 10px;
    border: 1px solid #ddd;
    background: linear-gradient(#222 50%, #eee 50%);
}
.colors {
    width: 26px;
    height: 26px;
    overflow: visible;
}
.metrics {
    display: grid;
    grid-template-columns: 12px 24px 22px 12px 26px 8px;
    gap: 2px 4px;
    margin: 0 14px 0 3px;
    padding-top: 2px;
    border-top: 1px solid #383838;
    white-space: nowrap;
}
.metrics .icon {
    width: 12px;
}
.metrics b, .stroke b {
    color: #e0c81a;
}
.metrics .dim {
    color: #484848;
}
.drop {
    width: 4px;
    height: 4px;
    margin-top: 4px;
    border: solid transparent;
    border-width: 4px 2px 0;
    border-top-color: #8a8a8a;
}
.stroke {
    display: flex;
    gap: 9px;
    height: 10px;
    margin: 2px 14px 0 5px;
    padding-top: 2px;
    border-top: 1px solid #383838;
    overflow: hidden;
}
.stroke select {
    flex: 1;
    border: 1px solid #333;
}

/* timeline */
.timeline {
    position: relative;
    flex: 1;
    min-height: 0;
    display: flex;
    flex-direction: column;
    border: solid #65560f;
    border-width: 2px 0 0 2px;
    background: #232323;
}
.timeline-head {
    display: grid;
    grid-template-columns: 459px 1fr;
}
.comp-tabs {
    display: flex;
    align-items: flex-start;
    gap: 24px;
    height: 17px;
    padding-left: 14px;
}
.comp-tabs a {
    display: flex;
    align-items: center;
    height: 14px;
    gap: 7px;
}
.comp-tabs .active {
    gap: 6px;
    border-bottom: 1px solid #9a9a9a;
    color: #c8c8c8;
}
.comp-tabs bdi {
    font-size: 8px;
}
.comp-tabs .active small {
    color: #888;
}
.controls {
    display: flex;
    align-items: flex-start;
    height: 21px;
    padding-left: 6px;
}
.time {
    width: 59px;
    white-space: nowrap;
}
.time b {
    display: block;
    padding-left: 2px;
    color: #f0d000;
    font-size: 9px;
    line-height: 12px;
}
.time small {
    display: block;
    color: #807018;
    font-size: 7px;
    line-height: 6px;
}
.controls .search {
    width: 269px;
    margin-top: 3px;
    padding: 1px 0 1px 3px;
}
.comp-buttons {
    display: grid;
    grid-template-columns: 20px 22px 16px 16px 22px 12px;
    margin: 4px 0 0 9px;
    color: #a5a5a5;
}
.comp-buttons svg {
    width: 11px;
    height: 11px;
}
.on {
    color: #e0c000;
}
.head-right {
    display: flex;
    flex-direction: column;
    justify-content: flex-end;
    min-width: 0;
    overflow: hidden;
}
.navigator {
    height: 5px;
    margin-bottom: 1px;
    border: solid #f0d000;
    border-width: 0 2px 0 5px;
    border-radius: 3px 0 0 3px;
    background: #6c6c6c;
}
.ruler {
    display: flex;
    height: 12px;
    margin: 0 23px 0 -23px;
    white-space: nowrap;
}
.ruler span {
    flex: none;
    text-align: center;
    line-height: 9px;
}
.ruler span::after {
    content: "";
    display: block;
    width: 1px;
    height: 3px;
    margin: 0 auto;
    background: #777;
}
.timeline-body {
    flex: 1;
    display: flex;
    flex-direction: column;
    min-height: 0;
}
.layers {
    width: 100%;
    table-layout: fixed;
    border-collapse: collapse;
}
.w-av { width: 40px; }
.w-arrow { width: 10px; }
.w-color { width: 12px; }
.w-num { width: 19px; }
.w-name { width: 124px; }
.w-parent { width: 70px; }
.w-mode { width: 40px; }
.w-t { width: 11px; }
.w-trk { width: 38px; }
.w-sw { width: 78px; }
.w-end { width: 17px; }
.layers th, .layers td {
    padding: 0;
    line-height: 9px;
    text-align: left;
    white-space: nowrap;
    overflow: hidden;
}
.layers th {
    height: 11px;
    border-bottom: 1px solid #111;
    background: #2d2d2d;
    font-size: 6px;
    font-weight: normal;
}
.layers .source {
    padding-left: 3px;
}
.layers .mode-head {
    padding-left: 4px;
}
.layers .work {
    padding-top: 1px;
    border-left: 3px solid #e8c800;
    background: #5f6060;
    vertical-align: bottom;
}
.cache {
    width: 100%;
    height: 2px;
    background: #111;
}
.layers td {
    height: 11px;
    border-bottom: 1px solid #222;
    background: #303030;
}
.layers tr:nth-child(2n) td {
    height: 10px;
}
.layers .track {
    background: #3b3b3b;
}
.slots {
    display: flex;
    padding-left: 2px;
}
.slots svg, .slots i, .slots em {
    width: 7px;
    height: 8px;
    margin: 0 1px;
    flex: none;
    color: #b0b0b0;
}
.slots .blank {
    background: #252525;
}
.slots em {
    font-family: "Liberation Serif", serif;
    font-size: 9px;
    line-height: 8px;
}
.head-tag {
    width: 8px;
    height: 8px;
}
.layers .swatch {
    display: block;
    width: 7px;
    height: 7px;
    margin-left: 2px;
}
.layers .num {
    padding-left: 2px;
}
.name {
    display: flex;
    align-items: center;
    gap: 2px;
    height: 9px;
    color: #b4b4b4;
}
.name svg {
    width: 10px;
    height: 9px;
    margin-left: 1px;
}
.layers .arrow {
    width: 6px;
    height: 8px;
    margin-left: 2px;
}
.parent {
    display: flex;
    gap: 4px;
}
.parent svg {
    width: 10px;
    height: 9px;
}
.layers select {
    display: block;
    height: 9px;
    padding: 0 11px 0 3px;
    line-height: 9px;
}
.parent select { width: 52px; }
.layers .mode { width: 35px; margin-left: 4px; }
.layers .trk { width: 33px; margin-left: 2px; }
.tbox {
    display: block;
    width: 7px;
    height: 9px;
    margin-left: 2px;
    background: #252525;
}
.bar {
    height: 9px;
    background: #73695a;
    border-radius: 1px;
}
.bar.audio {
    background: #737c72;
}
.bar.art {
    background: #71727f;
}
.empty {
    flex: 1;
    display: grid;
    grid-template-columns: 459px 1fr;
}
.empty div + div {
    background: #313131;
    border-left: 1px solid #151515;
}
.timeline-foot {
    display: flex;
    gap: 3px;
    flex: none;
    height: 8px;
    padding: 2px 0 0 2px;
    border-top: 1px solid #161616;
    overflow: hidden;
}
.timeline-foot svg {
    width: 8px;
    height: 8px;
}
.timeline-foot .zoom-out {
    width: 6px;
    height: 5px;
    margin-left: 427px;
}
.timeline-foot input {
    width: 34px;
    height: 6px;
}
.timeline-foot input::-webkit-slider-thumb {
    width: 6px;
    height: 6px;
    border-width: 1px;
}
.playhead {
    position: absolute;
    top: 30px;
    bottom: 8px;
    left: 463px;
    width: 1px;
    background: #b89c18;
}
.playhead::before {
    content: "";
    position: absolute;
    left: -3px;
    width: 7px;
    height: 8px;
    background: #f0c808;
    clip-path: polygon(0 0, 100% 0, 100% 60%, 50% 100%, 0 60%);
}
```
FILE: script.js
```
const SPAN = 50.6;    // seconds visible in the track area
const LEAD = 0.4;     // seconds shown before zero

const layers = [
    { num: 1, name: 'السادس', from: 45.7, to: 50.2, trk: '', fx: true },
    { num: 4, name: 'الرابع', from: 31.9, to: 50.2, trk: 'None' },
    { num: 6, name: 'المشهد الثالث', from: 29, to: 42, trk: 'Alpha', fx: true, matte: true },
    { num: 10, name: 'الثاني', from: 10.6, to: 40.5, trk: 'None', audio: true },
    { num: 11, name: 'المشهد الاول', from: 2.4, to: 32.2, trk: 'None' },
    { num: 12, name: 'تعليق الصوتي.mpeg', from: 2.4, to: 46.5, kind: 'audio', icon: 'mpeg', color: '#a9aeac', audio: true, hidden: true },
    { num: 13, name: 'ضمن مبا...ريع البدء بعلاجات التقويم', from: 0.1, to: 50, trk: '' },
    { num: 14, name: 'Layer 14/المشهد الاول.ai', from: -0.4, to: 50.2, kind: 'art', icon: 'ai', color: '#aea6d4', trk: 'None' }
];

function icon(id, cls) {
    return `<svg class="${cls || ''}"><use href="#${id}"/></svg>`;
}

function select(label, value, cls) {
    return `<select class="${cls || ''}" aria-label="${label}"><option>${value}</option></select>`;
}

function row(l) {
    const blank = '<i class="blank"></i>';
    const none = '<i></i>';
    const left = (l.from + LEAD) / SPAN * 100;
    const width = (l.to - l.from) / SPAN * 100;
    const video = l.kind !== 'audio';
    const label = l.color ? `<svg class="swatch" viewBox="0 0 7 7"><path d="M0 0h7v7H0z" fill="${l.color}"/></svg>` : '<i class="swatch sand"></i>';
    return `<tr>
        <td><span class="slots">${l.hidden ? none : icon('eye')}${l.audio ? icon('sound') : none}${blank}${blank}</span></td>
        <td>${icon('arrow', 'arrow')}</td>
        <td>${label}</td>
        <td class="num">${l.num}</td>
        <td><span class="name">${icon(l.icon || 'comp')}${l.matte ? icon('matte') : ''}<span>${l.name}</span></span></td>
        <td><span class="parent">${icon('whip')}${select('Parent', 'None')}</span></td>
        <td>${video ? select('Mode', 'Norma', 'mode') : ''}</td>
        <td>${video ? '<i class="tbox"></i>' : ''}</td>
        <td>${l.trk ? select('Track matte', l.trk, 'trk') : ''}</td>
        <td><span class="slots">${icon('shy')}${video ? blank : none}${video ? icon('slash') : none}${l.fx ? '<em>fx</em>' : none}${none}${video ? blank + blank + blank : none + blank}</span></td>
        <td></td>
        <td class="track"><div class="bar ${l.kind || ''}" style="margin-left:${left}%;width:${width}%"></div></td>
    </tr>`;
}

document.getElementById('layer-rows').innerHTML = layers.map(row).join('');

let marks = '';
for (let s = 0; s <= 50; s += 5) {
    marks += `<span style="width:${5 / SPAN * 100}%">${String(s).padStart(2, '0')}s</span>`;
}
document.getElementById('ruler').innerHTML = marks;
```
